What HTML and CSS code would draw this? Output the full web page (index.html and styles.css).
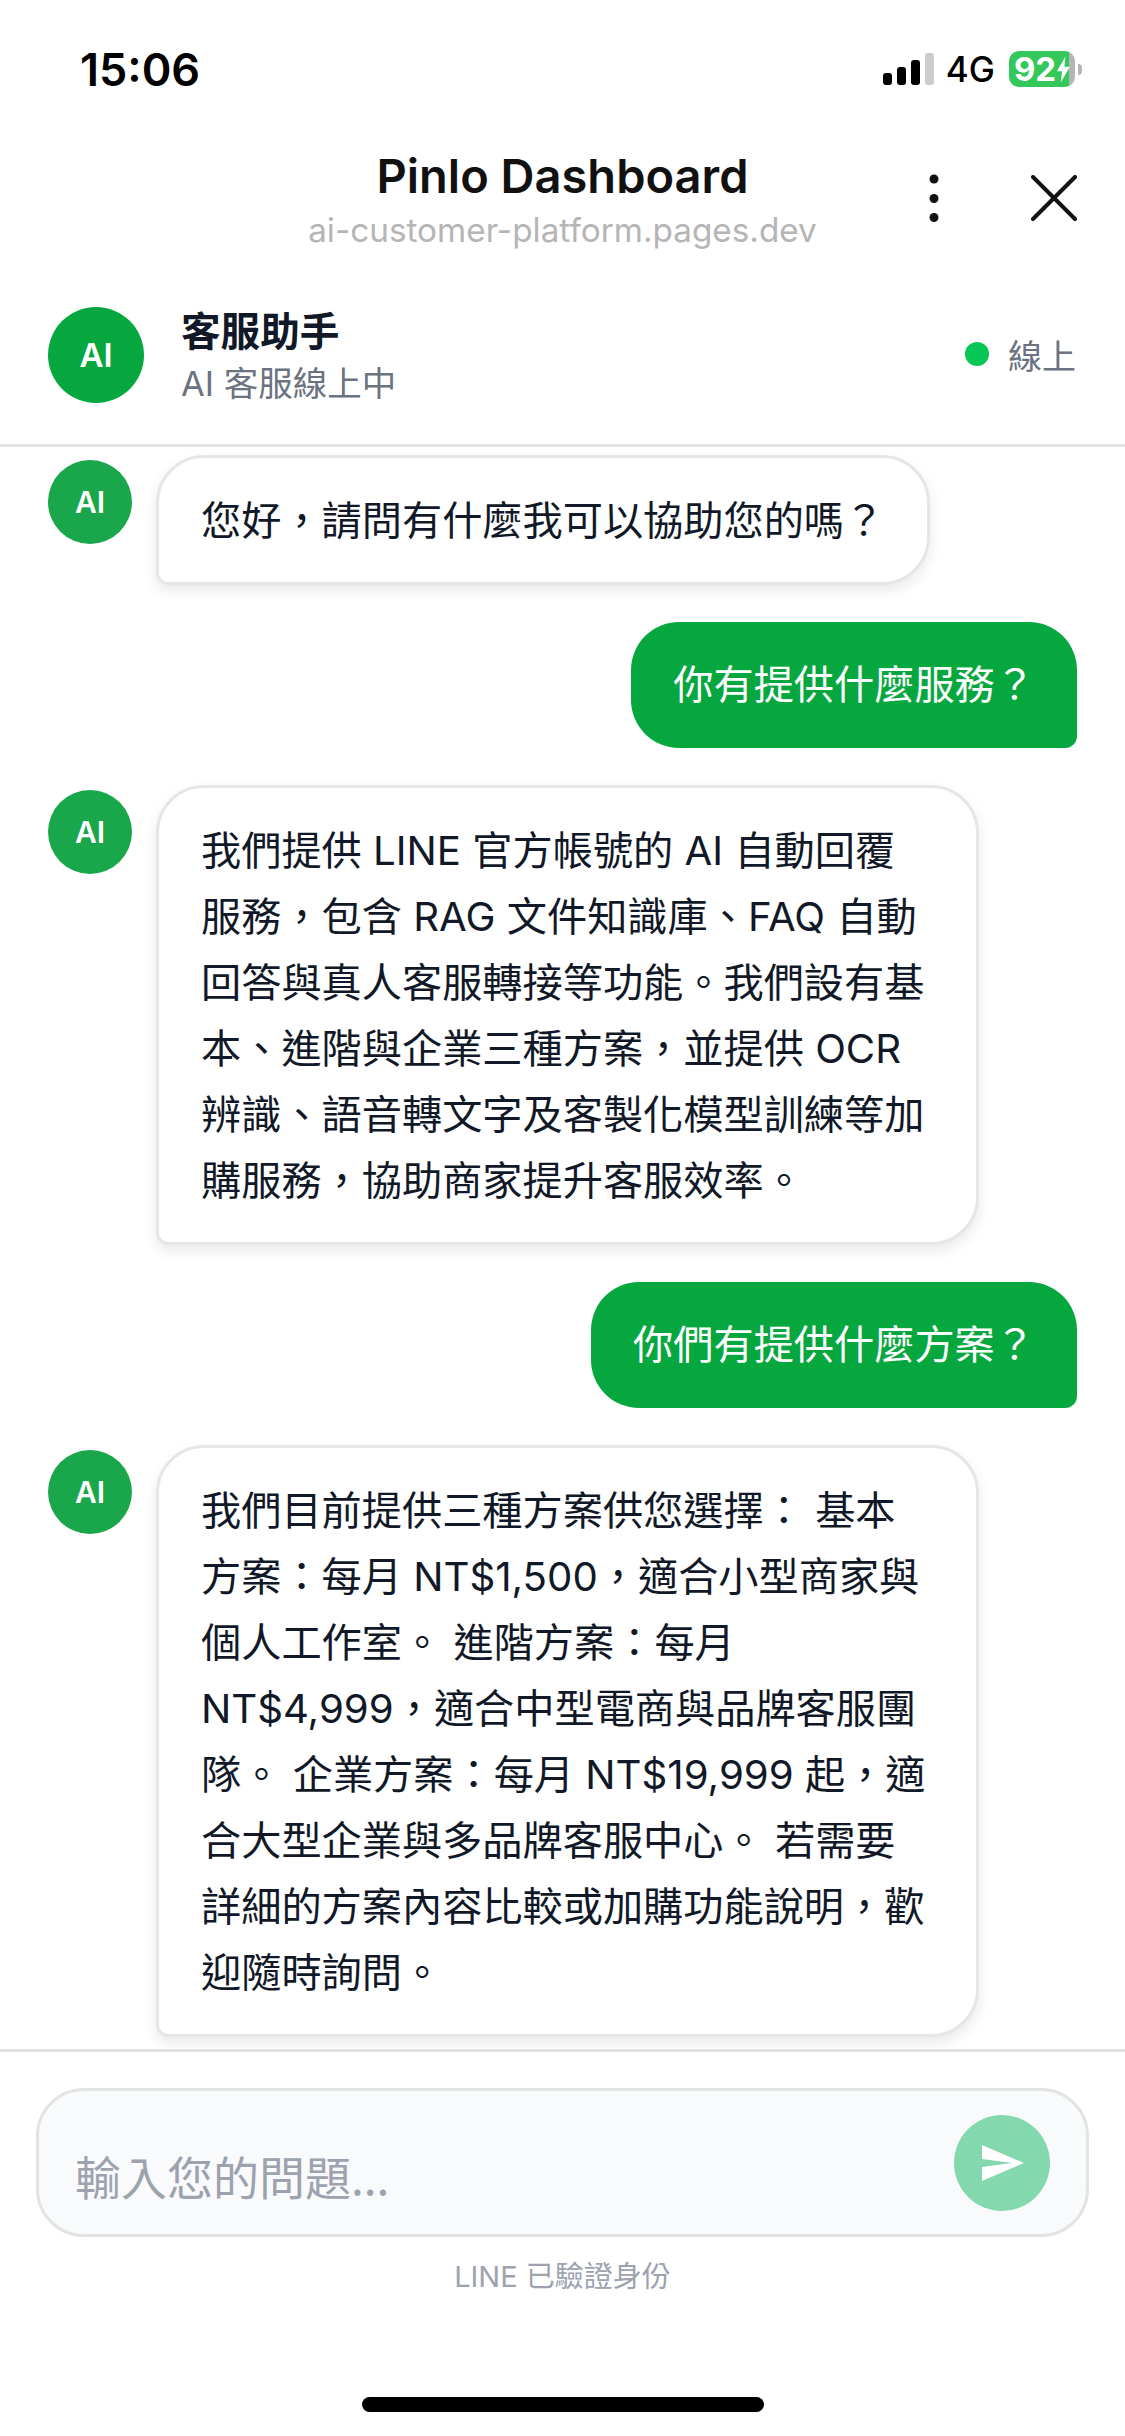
FILE: index.html
```html
<!DOCTYPE html>
<html lang="zh-Hant">
<head>
    <meta charset="UTF-8">
    <meta name="viewport" content="width=device-width, initial-scale=1.0">
    <title>Pinlo Dashboard</title>
    <link rel="stylesheet" href="styles.css">
</head>
<body>
    <div class="screen">
        <div class="status-bar">
            <span class="status-time">15:06</span>
            <div class="status-icons">
                <div class="signal">
                    <span class="signal-bar bar-1"></span>
                    <span class="signal-bar bar-2"></span>
                    <span class="signal-bar bar-3"></span>
                    <span class="signal-bar bar-4"></span>
                </div>
                <span class="network">4G</span>
                <div class="battery">
                    <div class="battery-body">
                        <span class="battery-level">92</span>
                        <svg class="battery-bolt" viewBox="0 0 14 28"><path d="M9 0 0 16h5.5L4 28l10-17H8z"/></svg>
                    </div>
                    <span class="battery-nub"></span>
                </div>
            </div>
        </div>

        <div class="nav-bar">
            <div></div>
            <div class="nav-title">
                <div class="site-name">Pinlo Dashboard</div>
                <div class="site-url">ai-customer-platform.pages.dev</div>
            </div>
            <div class="nav-actions">
                <svg class="icon-more" viewBox="0 0 10 48"><circle cx="5" cy="5" r="4.5"/><circle cx="5" cy="24.5" r="4.5"/><circle cx="5" cy="43.5" r="4.5"/></svg>
                <svg class="icon-close" viewBox="0 0 46 46"><path d="M2 2 44 44M44 2 2 44"/></svg>
            </div>
        </div>

        <div class="chat-header">
            <div class="avatar avatar-large">AI</div>
            <div class="chat-info">
                <div class="chat-name">客服助手</div>
                <div class="chat-sub"><span class="latin">AI </span>客服線上中</div>
            </div>
            <div class="chat-status"><span class="status-dot"></span>線上</div>
        </div>

        <div class="messages">
            <div class="message">
                <div class="avatar avatar-small">AI</div>
                <div class="bubble">您好，請問有什麼我可以協助您的嗎？</div>
            </div>
            <div class="message message-user">
                <div class="bubble">你有提供什麼服務？</div>
            </div>
            <div class="message">
                <div class="avatar avatar-small">AI</div>
                <div class="bubble">我們提供<span class="latin"> LINE </span>官方帳號的<span class="latin"> AI </span>自動回覆服務，包含<span class="latin"> RAG </span>文件知識庫、<span class="latin">FAQ </span>自動回答與真人客服轉接等功能。我們設有基本、進階與企業三種方案，並提供<span class="latin"> OCR </span>辨識、語音轉文字及客製化模型訓練等加購服務，協助商家提升客服效率。</div>
            </div>
            <div class="message message-user">
                <div class="bubble">你們有提供什麼方案？</div>
            </div>
            <div class="message">
                <div class="avatar avatar-small">AI</div>
                <div class="bubble">我們目前提供三種方案供您選擇：<span class="latin"> </span>基本方案：每月<span class="latin"> NT$1,500</span>，適合小型商家與個人工作室。<span class="latin"> </span>進階方案：每月<span class="latin"> NT$4,999</span>，適合中型電商與品牌客服團隊。<span class="latin"> </span>企業方案：每月<span class="latin"> NT$19,999 </span>起，適合大型企業與多品牌客服中心。<span class="latin"> </span>若需要詳細的方案內容比較或加購功能說明，歡迎隨時詢問。</div>
            </div>
        </div>

        <div class="composer">
            <div class="input-box">
                <input class="chat-input" type="text" placeholder="輸入您的問題...">
                <button class="send-button">
                    <svg class="icon-send" viewBox="0 0 24 24"><path d="M2.01 21 23 12 2.01 3 2 10l15 2-15 2z"/></svg>
                </button>
            </div>
            <div class="verified"><span class="latin">LINE </span>已驗證身份</div>
        </div>

        <div class="home-area"><span class="home-bar"></span></div>
    </div>
</body>
</html>
```

FILE: styles.css
```css
* {
    box-sizing: border-box;
}
body {
    font-family: 'Noto Sans CJK TC', sans-serif;
    background: #fff;
    margin: 0;
    padding: 0;
    color: #111827;
}
.latin {
    font-family: Inter, sans-serif;
    line-height: 1;
}
.screen {
    display: flex;
    flex-direction: column;
    width: 1125px;
    height: 2436px;
    overflow: hidden;
}

/* status bar */
.status-bar {
    display: flex;
    justify-content: space-between;
    align-items: center;
    height: 138px;
    padding: 0 43px 0 80px;
    font-family: Inter, sans-serif;
}
.status-time {
    font-size: 45px;
    font-weight: 600;
    color: #000;
}
.status-icons {
    display: flex;
    align-items: center;
}
.signal {
    display: flex;
    align-items: flex-end;
    gap: 5px;
    height: 32px;
    margin-right: 12px;
}
.signal-bar {
    width: 9px;
    background: #000;
    border-radius: 3px;
}
.bar-1 { height: 12px; }
.bar-2 { height: 18px; }
.bar-3 { height: 25px; }
.bar-4 { height: 32px; background: #ccc; }
.network {
    font-size: 35px;
    font-weight: 500;
    color: #000;
    margin-right: 14px;
}
.battery {
    display: flex;
    align-items: center;
    gap: 3px;
}
.battery-body {
    display: flex;
    align-items: center;
    justify-content: center;
    gap: 1px;
    width: 66px;
    height: 36px;
    background: linear-gradient(to right, #34c759 60px, #b5b5b5 60px);
    border-radius: 10px;
}
.battery-level {
    font-size: 33px;
    font-weight: 700;
    line-height: 36px;
    color: #fff;
}
.battery-bolt {
    width: 13px;
    height: 27px;
    fill: #fff;
}
.battery-nub {
    width: 4px;
    height: 11px;
    background: #b5b5b5;
    border-radius: 0 4px 4px 0;
}

/* browser nav */
.nav-bar {
    display: grid;
    grid-template-columns: 1fr auto 1fr;
    align-items: center;
    height: 126px;
    padding: 9px 48px 14px;
    font-family: Inter, sans-serif;
}
.nav-title {
    text-align: center;
}
.site-name {
    font-size: 47px;
    font-weight: 600;
    line-height: 58px;
    color: #111;
}
.site-url {
    font-size: 33.3px;
    line-height: 40px;
    margin-top: 5px;
    color: #b5b5b5;
}
.nav-actions {
    display: flex;
    justify-content: flex-end;
    align-items: center;
    gap: 92px;
    margin-bottom: 2px;
}
.icon-more {
    width: 10px;
    height: 48px;
    fill: #111;
}
.icon-close {
    width: 46px;
    height: 46px;
    fill: none;
    stroke: #111;
    stroke-width: 4;
    stroke-linecap: round;
}

/* chat header */
.chat-header {
    display: flex;
    align-items: center;
    height: 183px;
    padding: 2px 49px 0 48px;
    border-bottom: 3px solid #e1e5e3;
}
.avatar {
    display: flex;
    align-items: center;
    justify-content: center;
    flex-shrink: 0;
    border-radius: 50%;
    color: #fff;
    font-family: Inter, sans-serif;
    font-weight: 600;
}
.avatar-large {
    width: 96px;
    height: 96px;
    background: #06a73e;
    font-size: 33px;
}
.avatar-small {
    width: 84px;
    height: 84px;
    margin-top: 5px;
    background: #1aa64b;
    font-size: 30px;
}
.chat-info {
    flex: 1;
    margin-left: 37px;
}
.chat-name {
    font-size: 39.6px;
    font-weight: 600;
    line-height: 52px;
}
.chat-sub {
    font-size: 34.5px;
    line-height: 52px;
    color: #6b7280;
}
.chat-status {
    display: flex;
    align-items: center;
    gap: 19px;
    margin-top: -2px;
    font-size: 34px;
    color: #6b7280;
}
.status-dot {
    width: 24px;
    height: 24px;
    background: #06c755;
    border-radius: 50%;
}

/* messages */
.messages {
    flex: 1;
    display: flex;
    flex-direction: column;
    gap: 37px;
    padding: 8px 48px 0;
    overflow: hidden;
}
.message {
    display: flex;
    align-items: flex-start;
    gap: 24px;
}
.message-user {
    justify-content: flex-end;
}
.bubble {
    max-width: 823px;
    padding: 27px 43px 31px 42px;
    background: #fff;
    border: 3px solid #e3e8e6;
    border-radius: 48px 48px 48px 12px;
    box-shadow: 0 6px 14px rgba(0, 0, 0, 0.09);
    font-size: 40.2px;
    line-height: 66px;
    color: #111827;
}
.message-user .bubble {
    padding: 27px 42px 33px;
    background: #06a73e;
    border: none;
    border-radius: 48px 48px 12px 48px;
    box-shadow: none;
    color: #fff;
}

/* composer */
.composer {
    height: 348px;
    padding: 36px 36px 0;
    border-top: 3px solid #dfe3e1;
}
.input-box {
    display: flex;
    align-items: center;
    height: 149px;
    padding: 0 36px;
    background: #f9fafb;
    border: 3px solid #e1e4e2;
    border-radius: 48px;
}
.chat-input {
    flex: 1;
    min-width: 0;
    height: 100%;
    padding: 25px 0 0;
    border: none;
    outline: none;
    background: transparent;
    font-family: inherit;
    font-size: 46px;
}
.chat-input::placeholder {
    color: #9ca3af;
    opacity: 1;
}
.send-button {
    display: flex;
    align-items: center;
    justify-content: center;
    width: 96px;
    height: 96px;
    padding: 0;
    border: none;
    border-radius: 50%;
    background: #83d8ae;
}
.icon-send {
    width: 48px;
    height: 48px;
    fill: #fff;
}
.verified {
    margin-top: 19px;
    text-align: center;
    font-size: 29px;
    line-height: 36px;
    color: #9ca3af;
}

/* home indicator */
.home-area {
    display: flex;
    justify-content: center;
    height: 39px;
}
.home-bar {
    width: 402px;
    height: 15px;
    background: #000;
    border-radius: 8px;
}
```
